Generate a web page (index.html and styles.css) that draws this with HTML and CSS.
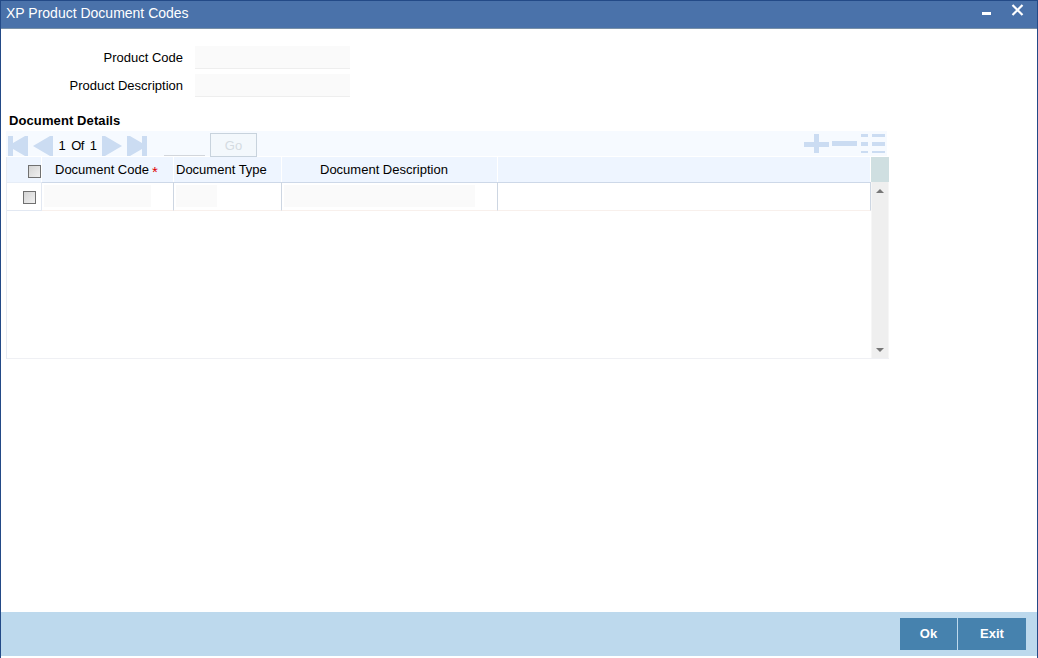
FILE: index.html
```html
<!DOCTYPE html>
<html lang="en">
  <head>
    <meta charset="UTF-8" />
    <meta name="viewport" content="width=device-width, initial-scale=1.0" />
    <title>XP Product Document Codes</title>
    <link rel="stylesheet" href="styles.css" />
  </head>
  <body>
    <div class="window">
      <div class="titlebar">
        <h1>XP Product Document Codes</h1>
        <svg class="window-icons" width="50" height="27" shape-rendering="crispEdges">
          <rect x="5" y="11" width="9" height="3" fill="#fff" />
          <path d="M35.5 4l10 10M45.5 4l-10 10" stroke="#fff" stroke-width="2.2" shape-rendering="auto" />
        </svg>
      </div>
      <div class="content">
        <div class="field">
          <label for="productCode">Product Code</label>
          <input id="productCode" type="text" readonly />
        </div>
        <div class="field">
          <label for="productDesc">Product Description</label>
          <input id="productDesc" type="text" readonly />
        </div>
        <h2>Document Details</h2>
        <div class="toolbar">
          <svg class="nav" width="46" height="20" fill="#cbdcf2">
            <path d="M0 0h5v7L17 0h3v20h-3L5 13v7H0z" />
            <path d="M42 0h3v20h-3L25 10z" />
          </svg>
          <span class="pages">1&nbsp; Of&nbsp; 1</span>
          <svg class="nav" width="46" height="20" fill="#cbdcf2">
            <path d="M0 0h3l17 10L3 20H0z" />
            <path d="M25 0h3l12 7V0h5v20h-5v-7l-12 7h-3z" />
          </svg>
          <input class="goto" type="text" readonly />
          <button class="go" disabled>Go</button>
          <svg class="tools" width="82" height="20" fill="#cbdcf2" shape-rendering="crispEdges">
            <path d="M10 0h5v8h10v5H15v6h-5v-6H0V8h10z" />
            <path d="M28 7h25v5H28z" />
            <path d="M57 0h7v3h-7zM68 0h13v3H68zM57 8h7v4h-7zM68 8h13v4H68zM57 17h7v2h-7zM68 17h13v2H68z" />
          </svg>
        </div>
        <div class="table1">
          <div class="row head">
            <div class="cell check"><span class="checkbox"></span></div>
            <div class="cell title-code">Document Code<span class="required">*</span></div>
            <div class="cell title-type">Document Type</div>
            <div class="cell title-desc">Document Description</div>
            <div class="cell"></div>
            <div class="corner"></div>
          </div>
          <div class="body">
            <div class="row data">
              <div class="cell check"><span class="checkbox"></span></div>
              <div class="cell"><input class="code" type="text" readonly /></div>
              <div class="cell"><input class="type" type="text" readonly /></div>
              <div class="cell"><input class="desc" type="text" readonly /></div>
              <div class="cell"></div>
            </div>
            <div class="scrollbar">
              <svg width="8" height="4" fill="#777"><path d="M4 0l4 4H0z" /></svg>
              <svg width="8" height="4" fill="#777"><path d="M0 0h8L4 4z" /></svg>
            </div>
          </div>
        </div>
      </div>
      <div class="footer">
        <button class="ok">Ok</button>
        <button class="exit">Exit</button>
      </div>
    </div>
  </body>
</html>
```

FILE: styles.css
```css
* {
  box-sizing: border-box;
  margin: 0;
  padding: 0;
}
body {
  background-color: white;
  color: black;
  font-family: "Liberation Sans", Arial, sans-serif;
  font-size: 13px;
}
input,
button {
  border: none;
  border-radius: 0;
  font-family: inherit;
}
svg {
  display: block;
}
.window {
  display: flex;
  flex-direction: column;
  height: 658px;
  padding-bottom: 2px;
  border: 1px solid #234a87;
  border-bottom: none;
}
.titlebar {
  display: flex;
  justify-content: space-between;
  height: 28px;
  padding: 0 10px 0 5px;
  background-color: #4a72aa;
  border-bottom: 1px solid #7890a8;
}
h1 {
  color: white;
  font-size: 14px;
  font-weight: normal;
  line-height: 24px;
}
.content {
  flex: 1;
  padding: 17px 0 0 5px;
}
.field {
  display: flex;
  height: 28px;
}
.field label {
  width: 177px;
  margin-right: 12px;
  line-height: 23px;
  text-align: right;
}
.field input {
  width: 155px;
  height: 23px;
  background-color: #fafafa;
  border-bottom: 1px solid #eee;
}
h2 {
  height: 29px;
  padding: 11px 0 0 3px;
  font-size: 13px;
  line-height: 15px;
  letter-spacing: 0.1px;
}
.toolbar {
  display: flex;
  width: 881px;
  height: 25px;
  background-color: #f6faff;
}
.nav {
  margin: 5px 0 0 2px;
}
.pages {
  width: 44px;
  margin-left: 2px;
  padding-right: 1px;
  line-height: 29px;
  text-align: center;
  letter-spacing: -0.6px;
}
.goto {
  width: 41px;
  height: 25px;
  margin-left: 16px;
  background: none;
  border-bottom: 1px solid #d2d6dc;
}
.go {
  width: 47px;
  height: 24px;
  margin: 2px 0 0 5px;
  background-color: #f3f8fc;
  border: 1px solid #c8d3dd;
  color: #d3dbe1;
  font-size: 13px;
}
.tools {
  margin: 3px 1px 0 auto;
}
.table1 {
  width: 883px;
  height: 202px;
  margin-top: 1px;
  border-left: 1px solid #e6eaf2;
}
.row {
  display: grid;
  grid-template-columns: 35px 132px 108px 216px 373px;
}
.head {
  grid-template-columns: 35px 132px 108px 216px 373px 18px;
  height: 25px;
  line-height: 25px;
}
.head .cell {
  background-color: #eef5ff;
  border-right: 1px solid white;
  border-bottom: 1px solid #cdd8e8;
}
.head .check {
  border-bottom-color: #e6edf7;
}
.title-code {
  padding-left: 13px;
}
.title-type {
  padding-left: 2px;
}
.title-desc {
  padding-left: 38px;
}
.corner {
  background-color: #cfdfe1;
}
.required {
  margin-left: 3px;
  color: #e00000;
  font-size: 15px;
  line-height: 0;
  vertical-align: -3px;
}
.checkbox {
  display: block;
  width: 13px;
  height: 13px;
  background: linear-gradient(135deg, #d4d4d4, #f0f0f0);
  border: 1px solid #707070;
}
.head .checkbox {
  margin: 8px 0 0 21px;
}
.body {
  display: flex;
  height: 177px;
  border-bottom: 1px solid #eff0f4;
}
.data {
  height: 29px;
}
.data .cell {
  padding: 3px 0 0 2px;
  border-right: 1px solid #cdd6e2;
  border-bottom: 1px solid #f8f0ec;
}
.data .check {
  padding: 9px 0 0 16px;
  border-color: #e2e8f2;
}
.data input {
  display: block;
  height: 22px;
  background-color: #fafafa;
}
.code {
  width: 107px;
}
.type {
  width: 41px;
}
.desc {
  width: 191px;
}
.scrollbar {
  display: flex;
  flex-direction: column;
  align-items: center;
  justify-content: space-between;
  width: 18px;
  padding: 7px 0 6px;
  background-color: #efefef;
  border: solid #f6f6f6;
  border-width: 0 1px;
}
.footer {
  display: flex;
  justify-content: flex-end;
  gap: 1px;
  height: 44px;
  padding: 6px 11px;
  background-color: #bdd9ed;
}
.footer button {
  height: 32px;
  padding-bottom: 2px;
  background-color: #4682ae;
  color: white;
  font-size: 13px;
  font-weight: bold;
}
.ok {
  width: 57px;
}
.exit {
  width: 68px;
}
```
